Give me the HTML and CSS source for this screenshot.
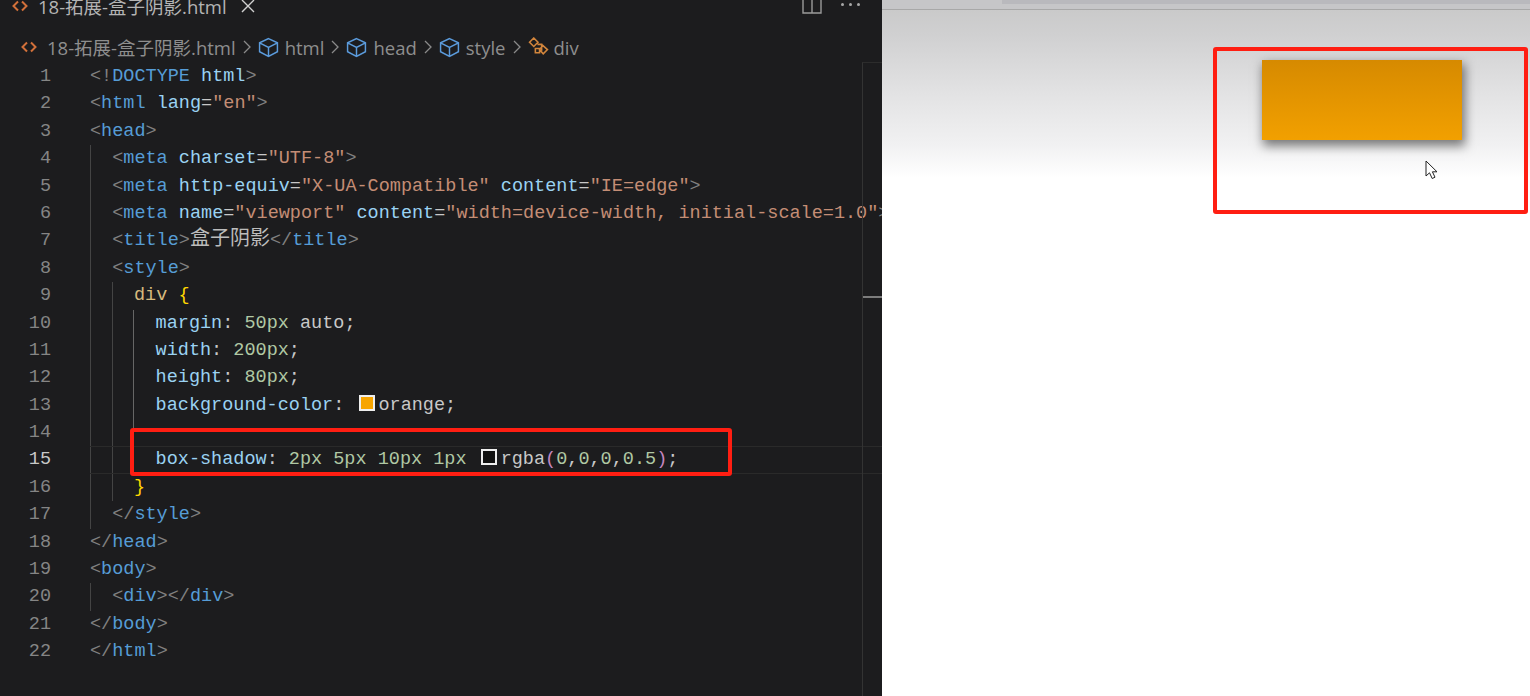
FILE: index.html
```html
<!DOCTYPE html>
<html lang="zh">
<head>
<meta charset="UTF-8">
<title>盒子阴影</title>
<link rel="stylesheet" href="styles.css">
</head>
<body>
<div class="screen">
  <section class="editor">
    <div class="tabbar">
      <div class="tab">
        <svg class="ficon" viewBox="0 0 16 12"><path d="M6 1.5 1.5 6 6 10.5M10 1.5 14.5 6 10 10.5"/></svg>
        <span>18-拓展-盒子阴影.html</span>
        <svg class="close" viewBox="0 0 14 14"><path d="M1 1 13 13M13 1 1 13"/></svg>
      </div>
      <div class="actions">
        <svg class="split" viewBox="0 0 20 14"><path d="M1 -4H19V13H1ZM10 -4V13"/></svg>
        <span class="dots"><i></i><i></i><i></i></span>
      </div>
    </div>
    <div class="crumbs">
      <svg class="ficon" viewBox="0 0 16 12"><path d="M6 1.5 1.5 6 6 10.5M10 1.5 14.5 6 10 10.5"/></svg>
      <span class="file">18-拓展-盒子阴影.html</span>
      <svg class="chev" viewBox="0 0 8 14"><path d="M1 1 7 7 1 13"/></svg>
      <svg class="cube" viewBox="0 0 20 20"><path d="M10 1.5 18.5 5.5V14L10 18.5 1.5 14V5.5ZM1.5 5.5 10 10 18.5 5.5M10 10V18.5"/></svg>
      <span>html</span>
      <svg class="chev" viewBox="0 0 8 14"><path d="M1 1 7 7 1 13"/></svg>
      <svg class="cube" viewBox="0 0 20 20"><path d="M10 1.5 18.5 5.5V14L10 18.5 1.5 14V5.5ZM1.5 5.5 10 10 18.5 5.5M10 10V18.5"/></svg>
      <span>head</span>
      <svg class="chev" viewBox="0 0 8 14"><path d="M1 1 7 7 1 13"/></svg>
      <svg class="cube" viewBox="0 0 20 20"><path d="M10 1.5 18.5 5.5V14L10 18.5 1.5 14V5.5ZM1.5 5.5 10 10 18.5 5.5M10 10V18.5"/></svg>
      <span>style</span>
      <svg class="chev" viewBox="0 0 8 14"><path d="M1 1 7 7 1 13"/></svg>
      <svg class="rule" viewBox="0 0 20 20"><path d="M5.5 1 1.5 5 5.5 9 9.5 5ZM9 7H13V13M7 11H11V15H7ZM14 8 18.5 12 14.5 16 11 12Z"/></svg>
      <span>div</span>
    </div>
    <div class="body">
      <ol class="gutter">
        <li>1</li><li>2</li><li>3</li><li>4</li><li>5</li><li>6</li><li>7</li><li>8</li><li>9</li><li>10</li><li>11</li>
        <li>12</li><li>13</li><li>14</li><li class="on">15</li><li>16</li><li>17</li><li>18</li><li>19</li><li>20</li><li>21</li><li>22</li>
      </ol>
      <div class="code">
        <div class="l"><b class="p">&lt;!</b><b class="t">DOCTYPE</b> <b class="a">html</b><b class="p">&gt;</b></div>
        <div class="l"><b class="p">&lt;</b><b class="t">html</b> <b class="a">lang</b>=<b class="s">"en"</b><b class="p">&gt;</b></div>
        <div class="l"><b class="p">&lt;</b><b class="t">head</b><b class="p">&gt;</b></div>
        <div class="l i1"><b class="p">&lt;</b><b class="t">meta</b> <b class="a">charset</b>=<b class="s">"UTF-8"</b><b class="p">&gt;</b></div>
        <div class="l i1"><b class="p">&lt;</b><b class="t">meta</b> <b class="a">http-equiv</b>=<b class="s">"X-UA-Compatible"</b> <b class="a">content</b>=<b class="s">"IE=edge"</b><b class="p">&gt;</b></div>
        <div class="l i1"><b class="p">&lt;</b><b class="t">meta</b> <b class="a">name</b>=<b class="s">"viewport"</b> <b class="a">content</b>=<b class="s">"width=device-width, initial-scale=1.0"</b><b class="p">&gt;</b></div>
        <div class="l i1"><b class="p">&lt;</b><b class="t">title</b><b class="p">&gt;</b><span class="cjk">盒子阴影</span><b class="p">&lt;/</b><b class="t">title</b><b class="p">&gt;</b></div>
        <div class="l i1"><b class="p">&lt;</b><b class="t">style</b><b class="p">&gt;</b></div>
        <div class="l i2"><b class="sel">div</b> <b class="br">{</b></div>
        <div class="l i3"><b class="a">margin</b>: <b class="n">50px</b> <span>auto</span>;</div>
        <div class="l i3"><b class="a">width</b>: <b class="n">200px</b>;</div>
        <div class="l i3"><b class="a">height</b>: <b class="n">80px</b>;</div>
        <div class="l i3"><b class="a">background-color</b>: <i class="swatch orange"></i><span>orange</span>;</div>
        <div class="l i3"></div>
        <div class="l i3 current"><b class="a">box-shadow</b>: <b class="n">2px</b> <b class="n">5px</b> <b class="n">10px</b> <b class="n">1px</b> <i class="swatch black"></i><span>rgba</span><b class="pu">(</b><b class="n">0</b>,<b class="n">0</b>,<b class="n">0</b>,<b class="n">0.5</b><b class="pu">)</b>;</div>
        <div class="l i2"><b class="br">}</b></div>
        <div class="l i1"><b class="p">&lt;/</b><b class="t">style</b><b class="p">&gt;</b></div>
        <div class="l"><b class="p">&lt;/</b><b class="t">head</b><b class="p">&gt;</b></div>
        <div class="l"><b class="p">&lt;</b><b class="t">body</b><b class="p">&gt;</b></div>
        <div class="l i1"><b class="p">&lt;</b><b class="t">div</b><b class="p">&gt;&lt;/</b><b class="t">div</b><b class="p">&gt;</b></div>
        <div class="l"><b class="p">&lt;/</b><b class="t">body</b><b class="p">&gt;</b></div>
        <div class="l"><b class="p">&lt;/</b><b class="t">html</b><b class="p">&gt;</b></div>
      </div>
      <div class="ruler"><span class="mark"></span></div>
      <div class="mark-box code-box"></div>
    </div>
  </section>
  <section class="preview">
    <div class="chrome"></div>
    <div class="page">
      <div class="demo"></div>
    </div>
    <div class="mark-box page-box"></div>
    <svg class="cursor" viewBox="0 0 14 20"><path d="M1 1V16L4.5 12.8 7.2 18.5 10 17.2 7.4 11.8H12Z"/></svg>
  </section>
</div>
</body>
</html>
```
FILE: styles.css
```css
* { box-sizing: border-box; }
html, body { margin: 0; height: 100%; overflow: hidden; }
.screen { display: flex; width: 1530px; height: 696px; }

.editor { width: 882px; flex: none; background: #1c1c1e; color: #d4d4d4; display: flex; flex-direction: column; position: relative; overflow: hidden; font-family: "Open Sans", "Noto Sans CJK SC", sans-serif; }
.ficon { width: 16px; height: 12px; fill: none; stroke: #d2703a; stroke-width: 2; flex: none; }

.tabbar { height: 13px; display: flex; justify-content: space-between; flex: none; }
.tab { display: flex; align-items: center; height: 11px; padding-left: 12px; gap: 10px; font-size: 18.5px; color: #b4b4b4; white-space: nowrap; }
.close { width: 14px; height: 14px; fill: none; stroke: #d0d0d0; stroke-width: 1.4; margin-left: 4px; }
.actions { display: flex; align-items: flex-start; gap: 19px; padding-right: 22px; }
.split { width: 20px; height: 14px; fill: none; stroke: #9a9a9a; stroke-width: 1.4; }
.dots { display: flex; gap: 5px; margin-top: 3px; }
.dots i { width: 3px; height: 3px; border-radius: 50%; background: #a8a8a8; }

.crumbs { height: 44px; padding: 24px 0 0 21px; display: flex; align-items: center; font-size: 18.5px; color: #8e8e8e; white-space: nowrap; flex: none; }
.crumbs .file { margin-left: 10px; }
.chev { width: 8px; height: 14px; fill: none; stroke: #8a8a8a; stroke-width: 1.3; margin: 0 7px; flex: none; }
.cube { width: 21px; height: 21px; fill: none; stroke: #5b9bdc; stroke-width: 1.4; margin-right: 6px; flex: none; }
.rule { width: 21px; height: 21px; fill: none; stroke: #d2853c; stroke-width: 1.5; margin-right: 5px; flex: none; }

.body { flex: 1; position: relative; display: flex; font-family: "Liberation Mono", "DejaVu Sans Mono", "Noto Sans CJK SC", monospace; font-size: 18.5px; }
.gutter { list-style: none; margin: 0; padding: 6px 0 0; width: 90px; flex: none; color: #858585; }
.gutter li { height: 27.4px; line-height: 27.4px; width: 51px; text-align: right; }
.gutter .on { color: #c8c8c8; }
.code { flex: 1; padding-top: 6px; min-width: 0; }
.l { height: 27.4px; line-height: 27.4px; position: relative; color: #c8c8c8; white-space: pre; }
.l b { font-weight: normal; }
.i1 { padding-left: 22.2px; background: linear-gradient(#444, #444) 0 0 / 1px 100% no-repeat; }
.i2 { padding-left: 44px; background: linear-gradient(#444, #444) 0 0 / 1px 100% no-repeat, linear-gradient(#444, #444) 22px 0 / 1px 100% no-repeat; }
.i3 { padding-left: 65.6px; background: linear-gradient(#444, #444) 0 0 / 1px 100% no-repeat, linear-gradient(#444, #444) 22px 0 / 1px 100% no-repeat, linear-gradient(#666, #666) 43px 0 / 1px 100% no-repeat; }
.current { box-shadow: inset 0 1px #2a2a2a, inset 0 -1px #2a2a2a; }
.p { color: #808080; }
.t { color: #569cd6; }
.a { color: #9ad2f2; }
.s { color: #c48d75; }
.n { color: #b0c8a4; }
.sel { color: #d7ba7d; }
.br { color: #ffd700; }
.pu { color: #c586c0; }
.cjk { font-family: "Noto Sans CJK SC", sans-serif; font-size: 20px; line-height: 0; color: #bcbcbc; }
.swatch { display: inline-block; width: 16px; height: 16px; margin: 0 3.5px 0 3.5px; border: 2px solid #eee; vertical-align: -1px; }
.orange { background: #f7a500; }
.black { background: #111; }

.ruler { position: absolute; top: 5px; right: 0; bottom: 0; width: 20px; border-left: 1px solid #333; border-top: 1px solid #2c2c2c; }
.mark { display: block; height: 2px; margin-top: 233px; background: #7c7c7c; }
.mark-box { position: absolute; border: 4px solid #ff1e12; border-radius: 3px; }
.code-box { left: 130px; top: 371px; width: 602px; height: 48px; }

.preview { flex: 1; position: relative; background: #fff; overflow: hidden; display: flex; flex-direction: column; }
.chrome { height: 10px; flex: none; background: linear-gradient(#b9b9bd, #b9b9bd) 120px 0 / 100% 4px no-repeat, #c6c6c8; border-bottom: 1px solid #a8a8a8; }
.page { flex: 1; background: linear-gradient(#cacaca 0, #d0d0d1 25px, #e3e3e4 85px, #f1f1f2 135px, #fff 168px) no-repeat; background-size: 100% 170px; background-color: #fff; padding-top: 50px; }
.demo { width: 200px; height: 80px; margin-left: 380px; background: linear-gradient(#d68a00, #f2a000); box-shadow: 2px 5px 10px 1px rgba(0,0,0,.5); }
.page-box { left: 331px; top: 47px; width: 315px; height: 167px; }
.cursor { position: absolute; left: 543px; top: 160px; width: 14px; height: 20px; fill: #fff; stroke: #222; stroke-width: 1; }
```
